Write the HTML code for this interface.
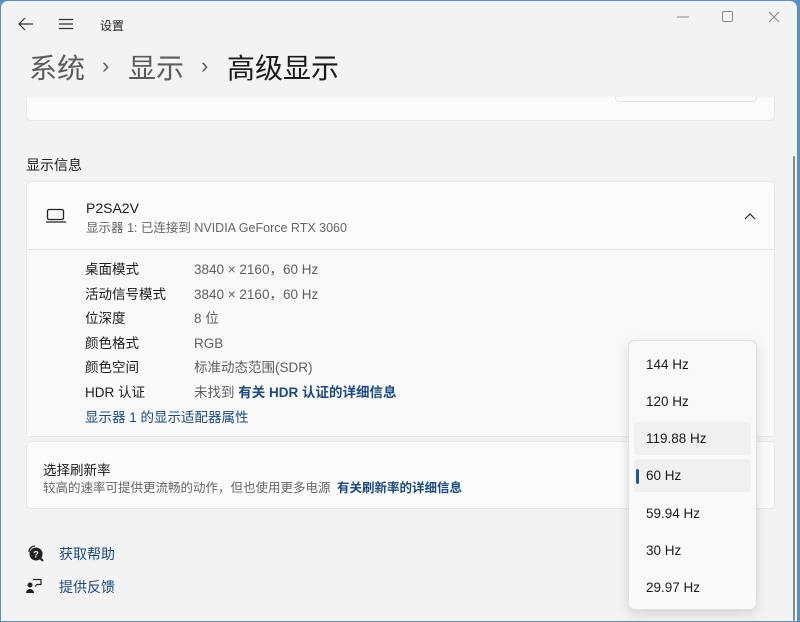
<!DOCTYPE html>
<html><head><meta charset="utf-8"><style>
*{margin:0;padding:0;box-sizing:border-box}
body{width:800px;height:622px;overflow:hidden;background:#5a8fc0;font-family:"Liberation Sans","Noto Sans CJK SC",sans-serif;position:relative}
.win{position:absolute;left:1px;top:1px;width:796px;height:620px;background:#f3f3f3;border-radius:7px 7px 0 0;overflow:hidden}
.abs{position:absolute;white-space:nowrap}
.card{position:absolute;left:25px;width:749px;background:#fbfbfb;border:1px solid #e7e7e7;border-radius:5px}
.lbl{position:absolute;left:84px;font-size:13.5px;line-height:18px;height:18px;color:#1b1b1b;white-space:nowrap}
.val{position:absolute;left:193px;font-size:13.5px;line-height:18px;height:18px;color:#5f5f5f;white-space:nowrap}
.link{color:#1a4a80;font-weight:bold}
.dd{position:absolute;left:627px;top:339px;width:129px;height:270px;background:#f9f9f9;border:1px solid #e0e0e0;border-radius:7px;box-shadow:0 4px 12px rgba(0,0,0,.12)}
.it{position:absolute;left:5px;width:117px;height:33px;font-size:13.5px;color:#1b1b1b;padding-left:12px;line-height:33px;border-radius:4px}
</style></head><body>
<div class="win">
<svg class="abs" style="left:17px;top:16px" width="16" height="14" viewBox="0 0 16 14"><path d="M7 1L1 7l6 6M1 7h14" fill="none" stroke="#333" stroke-width="1.2"/></svg>
<svg class="abs" style="left:57px;top:17px" width="16" height="12"><path d="M1 1.5h14M1 6h14M1 10.5h14" stroke="#333" stroke-width="1.2"/></svg>
<div class="abs" style="left:99px;top:16px;font-size:12px;color:#222">设置</div>
<svg class="abs" style="left:676px;top:15px" width="12" height="2"><path d="M0 1h12" stroke="#888"/></svg>
<svg class="abs" style="left:721px;top:10px" width="12" height="12"><rect x=".5" y=".5" width="10" height="10" rx="1.5" fill="none" stroke="#888"/></svg>
<svg class="abs" style="left:767px;top:10px" width="12" height="12"><path d="M1 1l10 10M11 1L1 11" stroke="#888"/></svg>
<div class="abs" style="left:28px;top:46px;font-size:28px;color:#5c5c5c">系统</div>
<div class="abs" style="left:101px;top:52px;font-size:22px;color:#5c5c5c">›</div>
<div class="abs" style="left:127px;top:46px;font-size:28px;color:#5c5c5c">显示</div>
<div class="abs" style="left:200px;top:52px;font-size:22px;color:#5c5c5c">›</div>
<div class="abs" style="left:226px;top:46px;font-size:28px;color:#1b1b1b">高级显示</div>
<div class="card" style="top:88px;height:32px;border-top:none;border-radius:0 0 5px 5px"></div>
<div class="abs" style="left:614px;top:88px;width:142px;height:13px;background:#fdfdfd;border:1px solid #e3e3e3;border-top:none;border-radius:0 0 4px 4px"></div>
<div class="abs" style="left:0;top:88px;width:796px;height:8px;background:#f3f3f3"></div>
<div class="abs" style="left:25px;top:154px;font-size:14px;color:#1b1b1b">显示信息</div>
<div class="card" style="top:180px;height:256px"></div>
<div class="abs" style="left:26px;top:248px;width:747px;height:1px;background:#e8e8e8"></div>
<div class="abs" style="left:26px;top:249px;width:747px;height:186px;background:#f9f9f9"></div>
<svg class="abs" style="left:44px;top:207px" width="22" height="16"><rect x="2.5" y="1.5" width="16" height="10" rx="1.5" fill="none" stroke="#222" stroke-width="1.3"/><path d="M1 14h20" stroke="#222" stroke-width="1.3"/></svg>
<div class="abs" style="left:85px;top:199px;font-size:14px;color:#1b1b1b">P2SA2V</div>
<div class="abs" style="left:85px;top:216px;font-size:12.5px;color:#666">显示器 1: 已连接到 NVIDIA GeForce RTX 3060</div>
<svg class="abs" style="left:743px;top:211px" width="12" height="8"><path d="M1 7l5-5 5 5" fill="none" stroke="#222" stroke-width="1.2"/></svg>
<div class="lbl" style="top:260px">桌面模式</div><div class="val" style="top:260px">3840 × 2160，60 Hz</div>
<div class="lbl" style="top:285px">活动信号模式</div><div class="val" style="top:285px">3840 × 2160，60 Hz</div>
<div class="lbl" style="top:309px">位深度</div><div class="val" style="top:309px">8 位</div>
<div class="lbl" style="top:334px">颜色格式</div><div class="val" style="top:334px">RGB</div>
<div class="lbl" style="top:358px">颜色空间</div><div class="val" style="top:358px">标准动态范围(SDR)</div>
<div class="lbl" style="top:383px">HDR 认证</div><div class="val" style="top:383px">未找到 <span class="link">有关 HDR 认证的详细信息</span></div>
<div class="lbl" style="top:408px;color:#1a4a80">显示器 1 的显示适配器属性</div>
<div class="card" style="top:440px;height:68px"></div>
<div class="abs" style="left:42px;top:458px;font-size:13.5px;color:#1b1b1b">选择刷新率</div>
<div class="abs" style="left:42px;top:476px;font-size:12.5px;color:#666">较高的速率可提供更流畅的动作，但也使用更多电源 <span class="link" style="margin-left:3px">有关刷新率的详细信息</span></div>
<svg class="abs" style="left:25px;top:543px" width="18" height="18"><circle cx="10" cy="10" r="6.5" fill="#222"/><text x="10" y="13.5" font-size="9" fill="#fff" text-anchor="middle" font-family="Liberation Sans" font-weight="bold">?</text><path d="M3 8a6 6 0 0 1 6-6" fill="none" stroke="#222" stroke-width="1.3"/><path d="M14 14l3 3" stroke="#222" stroke-width="2"/></svg>
<div class="abs" style="left:58px;top:543px;font-size:14px;color:#1a4a80">获取帮助</div>
<svg class="abs" style="left:24px;top:576px" width="20" height="18"><circle cx="5" cy="8" r="2.5" fill="#222"/><path d="M1 16a4 4 0 0 1 8 0z" fill="#222"/><path d="M8 2.5h8v5h-4l-2 2" fill="none" stroke="#222" stroke-width="1.2"/></svg>
<div class="abs" style="left:58px;top:576px;font-size:14px;color:#1a4a80">提供反馈</div>
<div class="abs" style="left:792px;top:155px;width:2px;height:465px;background:#8a8a8a;border-radius:1px"></div>
<div class="dd">
<div class="it" style="top:7px">144 Hz</div>
<div class="it" style="top:44px">120 Hz</div>
<div class="it" style="top:81px;background:#f0f0f0">119.88 Hz</div>
<div class="it" style="top:118px;background:#f0f0f0">60 Hz<div style="position:absolute;left:2px;top:10px;width:3px;height:15px;background:#1f5a94;border-radius:2px"></div></div>
<div class="it" style="top:156px">59.94 Hz</div>
<div class="it" style="top:193px">30 Hz</div>
<div class="it" style="top:230px">29.97 Hz</div>
</div>
</div>
</body></html>
